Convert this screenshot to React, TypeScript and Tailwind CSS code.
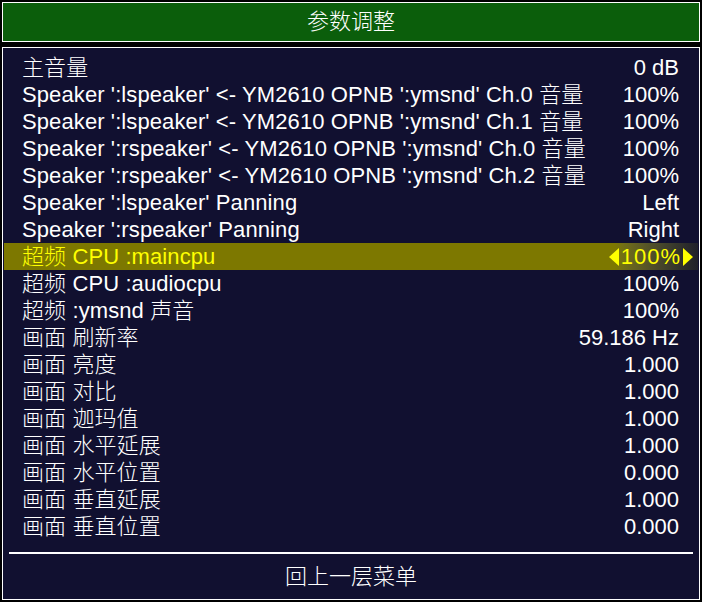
import React from "react";

type Row = { label: string; value: string; selected?: boolean };

const rows: Row[] = [
  { label: "主音量", value: "0 dB" },
  { label: "Speaker ':lspeaker' <- YM2610 OPNB ':ymsnd' Ch.0 音量", value: "100%" },
  { label: "Speaker ':lspeaker' <- YM2610 OPNB ':ymsnd' Ch.1 音量", value: "100%" },
  { label: "Speaker ':rspeaker' <- YM2610 OPNB ':ymsnd' Ch.0 音量", value: "100%" },
  { label: "Speaker ':rspeaker' <- YM2610 OPNB ':ymsnd' Ch.2 音量", value: "100%" },
  { label: "Speaker ':lspeaker' Panning", value: "Left" },
  { label: "Speaker ':rspeaker' Panning", value: "Right" },
  { label: "超频 CPU :maincpu", value: "100%", selected: true },
  { label: "超频 CPU :audiocpu", value: "100%" },
  { label: "超频 :ymsnd 声音", value: "100%" },
  { label: "画面 刷新率", value: "59.186 Hz" },
  { label: "画面 亮度", value: "1.000" },
  { label: "画面 对比", value: "1.000" },
  { label: "画面 迦玛值", value: "1.000" },
  { label: "画面 水平延展", value: "1.000" },
  { label: "画面 水平位置", value: "0.000" },
  { label: "画面 垂直延展", value: "1.000" },
  { label: "画面 垂直位置", value: "0.000" },
];

const font = {
  fontFamily: '"Liberation Sans", "Noto Sans CJK SC", sans-serif',
};

// CJK glyphs in the menu are drawn thin, latin text stays regular
const Label = ({ text }: { text: string }) => (
  <>
    {text.split(/([\u4e00-\u9fff]+)/).map((part, i) =>
      /[\u4e00-\u9fff]/.test(part) ? (
        <span key={i} className="font-extralight">
          {part}
        </span>
      ) : (
        <span key={i}>{part}</span>
      ),
    )}
  </>
);

const Arrow = ({ dir }: { dir: "left" | "right" }) => (
  <svg width="10" height="18" viewBox="0 0 10 18" className="fill-[#ffff00]">
    {dir === "left" ? (
      <polygon points="10,0 10,18 0,9" />
    ) : (
      <polygon points="0,0 0,18 10,9" />
    )}
  </svg>
);

const MenuRow = ({ row }: { row: Row }) => {
  if (row.selected) {
    return (
      <div className="flex h-[27px] items-center justify-between bg-gradient-to-r from-[#7d7800] from-[88%] to-[#20202a] pl-[18px] pr-[5px] text-[#ffff00]">
        <span className="whitespace-pre tracking-[0.1px]">
          <Label text={row.label} />
        </span>
        <span className="flex items-center gap-[2px]">
          <Arrow dir="left" />
          <span className="tracking-[1px]">{row.value}</span>
          <Arrow dir="right" />
        </span>
      </div>
    );
  }
  return (
    <div className="flex h-[27px] items-center justify-between pl-[18px] pr-[19px] text-white">
      <span className="whitespace-pre tracking-[0.1px]">
        <Label text={row.label} />
      </span>
      <span>{row.value}</span>
    </div>
  );
};

export default function App() {
  return (
    <div
      className="flex h-[602px] w-[702px] flex-col gap-[5px] bg-black p-[2px] text-[22px] leading-none"
      style={font}
    >
      <div className="flex h-[40px] items-center justify-center border border-white bg-[#0b5e0b] font-extralight text-white">
        参数调整
      </div>
      <div className="flex flex-1 flex-col border border-white bg-[#111030] px-[1px] pt-[6px]">
        {rows.map((r) => (
          <MenuRow key={r.label} row={r} />
        ))}
        <div className="mx-[5px] mt-[12px] h-[2px] bg-white" />
        <div className="flex flex-1 items-center justify-center font-extralight text-white">
          回上一层菜单
        </div>
      </div>
    </div>
  );
}
